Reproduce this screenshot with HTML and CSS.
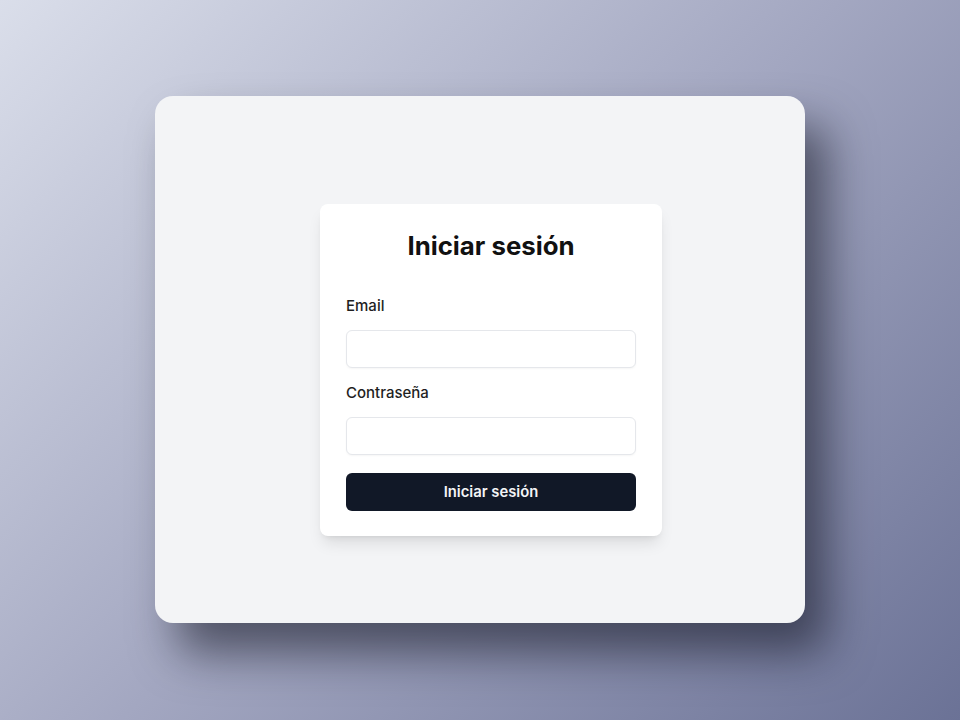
FILE: index.html
```html
<!DOCTYPE html>
<html lang="es">
<head>
<meta charset="utf-8">
<title>Iniciar sesión</title>
<link rel="stylesheet" href="styles.css">
</head>
<body>
  <div class="frame">
    <form class="card">
      <h1 class="title">Iniciar sesión</h1>
      <label class="label" for="email">Email</label>
      <input class="input" id="email" type="email">
      <label class="label" for="pass">Contraseña</label>
      <input class="input" id="pass" type="password">
      <button class="button" type="button">Iniciar sesión</button>
    </form>
  </div>
</body>
</html>
```
FILE: styles.css
```css
* { box-sizing: border-box; }
html, body { margin: 0; height: 100%; }
body {
  width: 960px;
  height: 720px;
  background: linear-gradient(135deg, #dadeea 0%, #a3a7c1 50%, #6b7296 100%);
  font-family: Inter, "Noto Sans", sans-serif;
  padding: 96px 155px 0 155px;
  overflow: hidden;
}
.frame {
  width: 650px;
  height: 527px;
  background: #f3f4f6;
  border-radius: 18px;
  box-shadow: 22px 30px 45px rgba(12, 14, 28, 0.55);
  padding: 108px 0 0 165px;
}
.card {
  width: 342px;
  height: 332px;
  background: #ffffff;
  border-radius: 8px;
  box-shadow: 0 10px 15px -3px rgba(0,0,0,0.1), 0 4px 6px -4px rgba(0,0,0,0.1);
  padding: 26px 26px 25px;
  display: flex;
  flex-direction: column;
  margin: 0;
}
.title {
  margin: 0;
  font-size: 25.8px;
  line-height: 32px;
  font-weight: 700;
  text-align: center;
  color: #111111;
}
.label {
  display: block;
  font-size: 15px;
  line-height: 20px;
  font-weight: 500;
  color: #1f1f1f;
  margin-top: 34px;
  margin-bottom: 14px;
}
.label + .input + .label { margin-top: 15px; }
.input {
  display: block;
  width: 290px;
  height: 38px;
  border: 1px solid #e5e7eb;
  border-radius: 6px;
  background: #fff;
  font: inherit;
  padding: 0 12px;
  margin: 0;
  box-shadow: 0 1px 2px rgba(0,0,0,0.04);
}
.button {
  margin-top: 18px;
  width: 290px;
  height: 38px;
  border: none;
  border-radius: 6px;
  background: #111827;
  color: #f3f4f6;
  font-family: inherit;
  font-size: 14.8px;
  font-weight: 600;
  cursor: pointer;
}
```
